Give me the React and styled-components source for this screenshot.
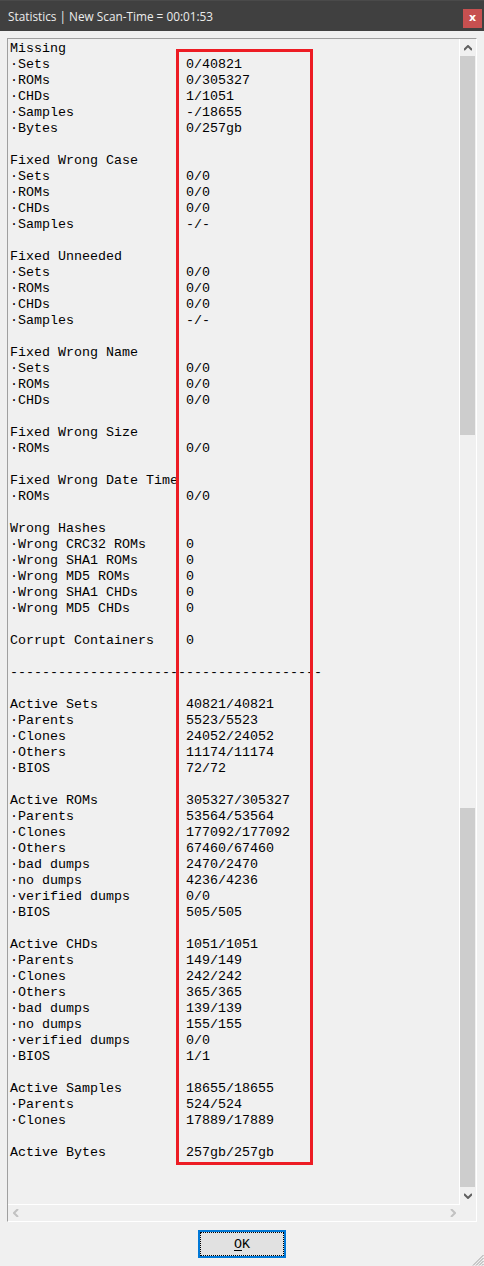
import styled, { createGlobalStyle } from "styled-components";

const GlobalStyle = createGlobalStyle`
    html, body {
        margin: 0;
        padding: 0;
        background: #f0f0f0;
    }
`

const Window = styled.div`
    position: relative;
    width: 484px;
    height: 1266px;
    display: flex;
    flex-direction: column;
    background: #f0f0f0;
    overflow: hidden;
`

const TitleBar = styled.div`
    height: 31px;
    flex: none;
    background: #404040;
    border-top: 1px solid #4a4a4a;
    box-sizing: border-box;
    display: flex;
    align-items: center;
    justify-content: space-between;
    padding: 0 2px 0 8px;
`

const Title = styled.span`
    font-family: "Open Sans", "Noto Sans", sans-serif;
    font-size: 11.8px;
    color: #ececec;
    margin-top: -1px;
`

const CloseButton = styled.div`
    width: 19px;
    height: 19px;
    margin-top: 4px;
    background: #c75050;
    color: #fff;
    display: flex;
    align-items: center;
    justify-content: center;
    font-family: "DejaVu Sans", sans-serif;
    font-weight: bold;
    font-size: 11px;
    line-height: 1;
    padding-bottom: 1px;
    box-sizing: border-box;
`

const Body = styled.div`
    flex: 1;
    display: flex;
    flex-direction: column;
    padding: 7px 7px 0 7px;
`

const ListBox = styled.div`
    height: 1184px;
    box-sizing: border-box;
    border-top: 1px solid #a0a0a0;
    border-left: 1px solid #a0a0a0;
    border-right: 1px solid #ffffff;
    border-bottom: 1px solid #ffffff;
    display: grid;
    grid-template-columns: 1fr 16px;
    grid-template-rows: 1fr 16px;
`

const Viewport = styled.div`
    border-right: 1px solid #ffffff;
    border-bottom: 1px solid #ffffff;
    overflow: hidden;
    padding: 2px 0 0 2px;
    font-family: "Liberation Mono", "Courier New", monospace;
    font-size: 13.333px;
    color: #000;
`

const Line = styled.div`
    height: 16px;
    line-height: 16px;
    display: flex;
    white-space: pre;
`

const Label = styled.span`
    width: 22ch;
    flex: none;
`

const Value = styled.span``

const VScroll = styled.div`
    display: flex;
    flex-direction: column;
`

const Arrow = styled.div`
    height: ${p => p.$h}px;
    flex: none;
    display: flex;
    align-items: center;
    justify-content: center;
    padding-right: 1px;
`

const Thumb = styled.div`
    height: ${p => p.$h}px;
    width: 15px;
    flex: none;
    background: ${p => p.$on ? "#cdcdcd" : "transparent"};
`

const HScroll = styled.div`
    display: flex;
    align-items: center;
    justify-content: space-between;
    padding: 0 4px 0 5px;
`

const Footer = styled.div`
    height: 44px;
    display: flex;
    justify-content: center;
    align-items: flex-start;
    padding-top: 8px;
    box-sizing: border-box;
`

const OkButton = styled.button`
    width: 88px;
    height: 28px;
    box-sizing: border-box;
    border: 2px solid #0078d7;
    background: #e1e1e1;
    outline: 1px dotted #000;
    outline-offset: -3px;
    font-family: "Liberation Mono", "Courier New", monospace;
    font-size: 13.333px;
    color: #000;
    padding: 0;

    u {
        text-underline-offset: 2px;
    }
`

const Highlight = styled.div`
    position: absolute;
    left: 176px;
    top: 49px;
    width: 137px;
    height: 1116px;
    box-sizing: border-box;
    border: 3px solid #ed1c24;
    pointer-events: none;
`

const Grip = styled.svg`
    position: absolute;
    right: 0;
    bottom: 0;
`

const rows = [
    ["Missing"],
    ["·Sets", "0/40821"],
    ["·ROMs", "0/305327"],
    ["·CHDs", "1/1051"],
    ["·Samples", "-/18655"],
    ["·Bytes", "0/257gb"],
    [],
    ["Fixed Wrong Case"],
    ["·Sets", "0/0"],
    ["·ROMs", "0/0"],
    ["·CHDs", "0/0"],
    ["·Samples", "-/-"],
    [],
    ["Fixed Unneeded"],
    ["·Sets", "0/0"],
    ["·ROMs", "0/0"],
    ["·CHDs", "0/0"],
    ["·Samples", "-/-"],
    [],
    ["Fixed Wrong Name"],
    ["·Sets", "0/0"],
    ["·ROMs", "0/0"],
    ["·CHDs", "0/0"],
    [],
    ["Fixed Wrong Size"],
    ["·ROMs", "0/0"],
    [],
    ["Fixed Wrong Date Time"],
    ["·ROMs", "0/0"],
    [],
    ["Wrong Hashes"],
    ["·Wrong CRC32 ROMs", "0"],
    ["·Wrong SHA1 ROMs", "0"],
    ["·Wrong MD5 ROMs", "0"],
    ["·Wrong SHA1 CHDs", "0"],
    ["·Wrong MD5 CHDs", "0"],
    [],
    ["Corrupt Containers", "0"],
    [],
    ["-".repeat(39)],
    [],
    ["Active Sets", "40821/40821"],
    ["·Parents", "5523/5523"],
    ["·Clones", "24052/24052"],
    ["·Others", "11174/11174"],
    ["·BIOS", "72/72"],
    [],
    ["Active ROMs", "305327/305327"],
    ["·Parents", "53564/53564"],
    ["·Clones", "177092/177092"],
    ["·Others", "67460/67460"],
    ["·bad dumps", "2470/2470"],
    ["·no dumps", "4236/4236"],
    ["·verified dumps", "0/0"],
    ["·BIOS", "505/505"],
    [],
    ["Active CHDs", "1051/1051"],
    ["·Parents", "149/149"],
    ["·Clones", "242/242"],
    ["·Others", "365/365"],
    ["·bad dumps", "139/139"],
    ["·no dumps", "155/155"],
    ["·verified dumps", "0/0"],
    ["·BIOS", "1/1"],
    [],
    ["Active Samples", "18655/18655"],
    ["·Parents", "524/524"],
    ["·Clones", "17889/17889"],
    [],
    ["Active Bytes", "257gb/257gb"],
]

function Chevron({ dir, color }) {
    const pts = {
        up: "0,5 4,1 8,5",
        down: "0,1 4,5 8,1",
        left: "5,0 1,4 5,8",
        right: "1,0 5,4 1,8",
    }[dir]
    const vertical = dir === "up" || dir === "down"
    return (
        <svg width={vertical ? 8 : 6} height={vertical ? 6 : 8} viewBox={vertical ? "0 0 8 6" : "0 0 6 8"}>
            <polyline points={pts} fill="none" stroke={color} strokeWidth="2" />
        </svg>
    )
}

export default function App () {
    return (
        <Window>
            <GlobalStyle />
            <TitleBar>
                <Title>Statistics | New Scan-Time = 00:01:53</Title>
                <CloseButton>x</CloseButton>
            </TitleBar>
            <Body>
                <ListBox>
                    <Viewport>
                        {rows.map((r, i) => (
                            <Line key={i}>
                                {r.length === 2 ? (
                                    <>
                                        <Label>{r[0]}</Label>
                                        <Value>{r[1]}</Value>
                                    </>
                                ) : (
                                    <span>{r[0] || " "}</span>
                                )}
                            </Line>
                        ))}
                    </Viewport>
                    <VScroll>
                        <Arrow $h={17}><Chevron dir="up" color="#606060" /></Arrow>
                        <Thumb $h={379} $on />
                        <Thumb $h={373} />
                        <Thumb $h={379} $on />
                        <Arrow $h={18}><Chevron dir="down" color="#606060" /></Arrow>
                    </VScroll>
                    <HScroll>
                        <Chevron dir="left" color="#c2c2c2" />
                        <Chevron dir="right" color="#c2c2c2" />
                    </HScroll>
                    <div />
                </ListBox>
                <Footer>
                    <OkButton><u>O</u>K</OkButton>
                </Footer>
            </Body>
            <Highlight />
            <Grip width="12" height="12" viewBox="0 0 12 12">
                <g stroke="#a0a0a0" strokeWidth="1">
                    <line x1="11.5" y1="1" x2="1" y2="11.5" />
                    <line x1="11.5" y1="4" x2="4" y2="11.5" />
                    <line x1="11.5" y1="7" x2="7" y2="11.5" />
                    <line x1="11.5" y1="10" x2="10" y2="11.5" />
                </g>
            </Grip>
        </Window>
    )
}
